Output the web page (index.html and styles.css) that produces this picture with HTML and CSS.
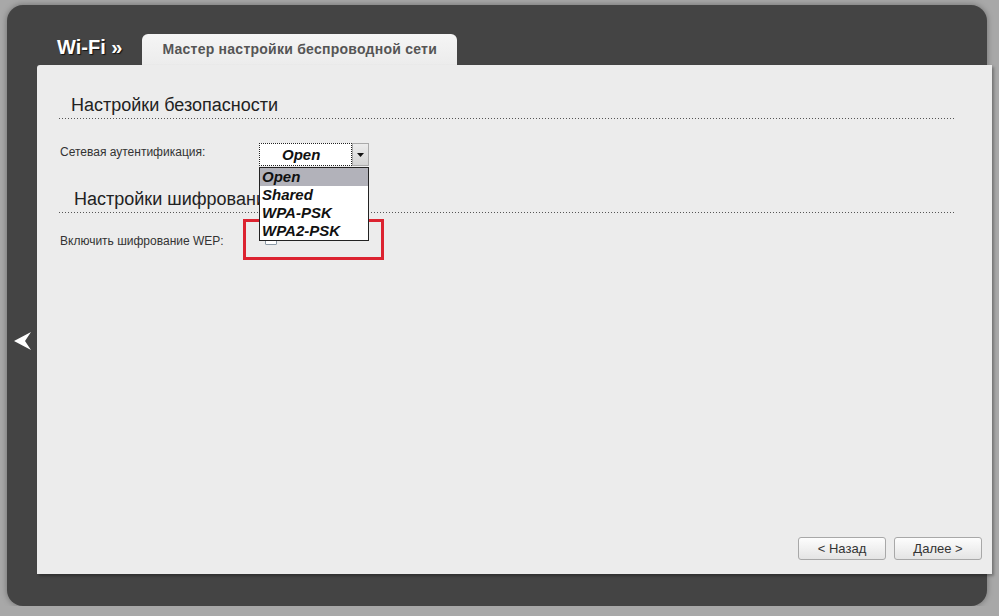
FILE: index.html
```html
<!DOCTYPE html>
<html lang="ru">
  <head>
    <meta charset="UTF-8" />
    <meta name="viewport" content="width=device-width, initial-scale=1.0" />
    <title>Wi-Fi — Мастер настройки беспроводной сети</title>
    <link rel="stylesheet" href="styles.css">
  </head>
  <body>
    <!-- рамка интерфейса -->
    <div class="frame">
      <div class="header">
        <span class="crumb">Wi-Fi »</span>
        <div class="tab">Мастер настройки беспроводной сети</div>
      </div>

      <div class="main">
        <div class="side">
          <svg class="back" width="18" height="20" viewBox="0 0 18 20">
            <polygon points="0,10 17,1 11,10 17,19" fill="#fff" />
          </svg>
        </div>

        <div class="panel">
          <!-- настройки безопасности -->
          <div class="section">
            <h2 class="section-title">Настройки безопасности</h2>
            <div class="row row-auth">
              <label class="row-label">Сетевая аутентификация:</label>
              <div class="select">
                <div class="select-value">Open</div>
                <div class="select-btn">
                  <svg width="7" height="4" viewBox="0 0 7 4"><polygon points="0,0 7,0 3.5,4" fill="#111" /></svg>
                </div>
                <!-- раскрытый список лежит поверх заголовка ниже -->
                <ul class="select-list">
                  <li class="active">Open</li>
                  <li>Shared</li>
                  <li>WPA-PSK</li>
                  <li>WPA2-PSK</li>
                </ul>
              </div>
            </div>
          </div>

          <!-- настройки шифрования -->
          <div class="section">
            <h2 class="section-title title-enc">Настройки шифрования</h2>
            <div class="row row-wep">
              <label class="row-label">Включить шифрование WEP:</label>
              <input type="checkbox" class="check" />
            </div>
          </div>

          <div class="mark"></div>

          <div class="actions">
            <button type="button" class="btn">&lt; Назад</button>
            <button type="button" class="btn">Далее &gt;</button>
          </div>
        </div>
      </div>
    </div>
  </body>
</html>
```

FILE: styles.css
```css
/* общие */
body {
  margin: 0;
  font-family: "Liberation Sans", Arial, sans-serif;
  background: #a8a8a8;
  overflow: hidden;
}

.frame {
  margin: 5px 0 0 7px;
  width: 980px;
  height: 601px;
  background: #444;
  border-radius: 16px;
  box-shadow: 0 0 6px rgba(0, 0, 0, 0.35);
  display: flex;
  flex-direction: column;
}

/* шапка */
.header {
  height: 60px;
  padding-left: 50px;
  display: flex;
  align-items: flex-end;
}

.crumb {
  color: #fff;
  font-size: 20px;
  font-weight: bold;
  margin-bottom: 6px;
  text-shadow: 1px 1px 1px #111;
}

.tab {
  margin-left: 20px;
  width: 315px;
  height: 31px;
  box-sizing: border-box;
  padding-left: 20px;
  line-height: 31px;
  font-size: 14px;
  font-weight: bold;
  letter-spacing: 0.25px;
  color: #555;
  background: linear-gradient(#f5f5f5, #ececec);
  border-radius: 6px 6px 0 0;
}

/* основная часть */
.main {
  display: flex;
  height: 509px;
}

.side {
  width: 30px;
  flex-shrink: 0;
}

.back {
  display: block;
  margin: 266px 0 0 7px;
}

.panel {
  position: relative;
  flex: 1;
  margin-right: -5px;
  padding: 0 37px 0 22px;
  background: #ececec;
  border-radius: 3px 0 0 0;
  box-shadow: 2px 2px 3px rgba(0, 0, 0, 0.3);
  display: flex;
  flex-direction: column;
}

.section-title {
  margin: 30px 0 0;
  padding: 0 0 3px 12px;
  font-size: 18px;
  font-weight: normal;
  line-height: 21px;
  color: #222;
  white-space: nowrap;
  background: repeating-linear-gradient(90deg, #555 0 1px, transparent 1px 3px) left bottom / 100% 1px no-repeat;
}

.title-enc {
  margin-top: 23px;
  padding-left: 15px;
}

.row {
  display: flex;
  align-items: flex-start;
  padding-left: 1px;
}

.row-auth {
  margin-top: 24px;
  height: 23px;
}

.row-wep {
  margin-top: 19px;
}

.row-label {
  width: 199px;
  padding-top: 2px;
  font-size: 12px;
  color: #333;
}

/* выпадающий список */
.select {
  position: relative;
  width: 110px;
  height: 23px;
  display: flex;
}

.select-value {
  flex: 1;
  box-sizing: border-box;
  padding-left: 22px;
  border: 1px dotted #222;
  background: #fff;
  font-size: 15px;
  font-weight: bold;
  font-style: italic;
  line-height: 21px;
  color: #111;
}

.select-btn {
  width: 17px;
  box-sizing: border-box;
  border: 1px solid #aaa;
  background: linear-gradient(#ececec, #d4d4d4);
  display: flex;
  align-items: center;
  justify-content: center;
}

.select-list {
  position: absolute;
  top: 24px;
  left: 0;
  z-index: 5;
  width: 110px;
  box-sizing: border-box;
  margin: 0;
  padding: 0;
  list-style: none;
  border: 1px solid #222;
  background: #fff;
}

.select-list li {
  height: 18px;
  padding-left: 2px;
  font-size: 15px;
  font-weight: bold;
  font-style: italic;
  line-height: 18px;
  color: #111;
}

.select-list li.active {
  background: #b2b2ba;
}

.check {
  appearance: none;
  margin: 1px 0 0 6px;
  width: 12px;
  height: 12px;
  border: 1px solid #8c9aa6;
  border-radius: 1px;
  background: #fff;
}

/* красная рамка-пометка */
.mark {
  position: absolute;
  left: 206px;
  top: 154px;
  z-index: 3;
  width: 141px;
  height: 41px;
  box-sizing: border-box;
  border: 3px solid #dc2330;
}

/* кнопки */
.actions {
  margin-top: auto;
  margin-right: -27px;
  padding-bottom: 14px;
  display: flex;
  justify-content: flex-end;
  gap: 8px;
}

.btn {
  width: 88px;
  height: 23px;
  font-family: "Liberation Sans", Arial, sans-serif;
  font-size: 13px;
  color: #333;
  background: linear-gradient(#fdfdfd, #e4e4e4);
  border: 1px solid #a8a8a8;
  border-radius: 3px;
  cursor: pointer;
}
```
